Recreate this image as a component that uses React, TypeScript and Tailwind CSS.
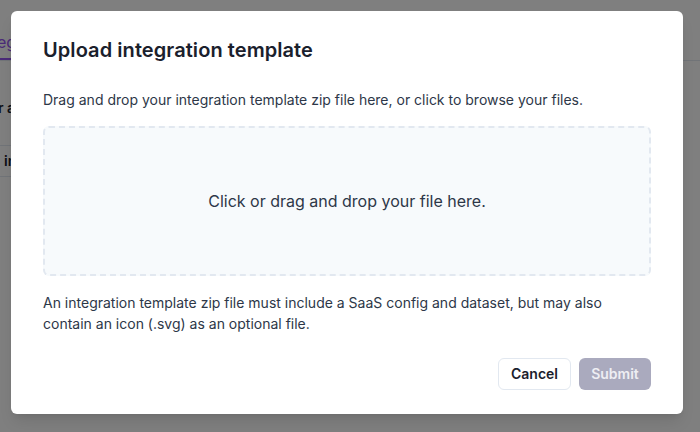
// Upload dialog over a dimmed integrations page.
function PageBehind() {
  return (
    <div className="h-full w-full overflow-hidden bg-white">
      <div className="flex h-[61px] items-end border-b border-[#e2e8f0]">
        <div className="w-[40px] border-b-2 border-[#9656f0] pb-[4px] text-base leading-6 text-[#9656f0]">
          <span className="ml-[-3px]">eg</span>
        </div>
      </div>
      <div className="mt-[37px] text-sm font-semibold leading-5 text-[#1a202c]">
        <span className="ml-[-2px]">r a</span>
      </div>
      <div className="mt-[27px] flex h-[32px] w-[660px] items-center border-y border-[#e2e8f0] text-sm font-semibold text-[#1a202c]">
        <span className="ml-1">in</span>
      </div>
    </div>
  );
}

export default function App() {
  return (
    <div className="relative h-[432px] w-[700px] overflow-hidden font-['Inter',sans-serif]">
      <PageBehind />
      <div className="absolute inset-0 bg-black/50" />
      <div className="absolute left-[11px] top-[11px] flex h-[403px] w-[672px] flex-col rounded-md bg-white px-8 shadow-lg">
        <h2 className="mt-[25px] text-xl font-semibold leading-7 tracking-[0.07px] text-[#1a202c]">
          Upload integration template
        </h2>
        <p className="mt-[26px] text-sm leading-5 text-[#2d3748]">
          Drag and drop your integration template zip file here, or click to browse your files.
        </p>
        <div className="mt-[16px] flex h-[150px] items-center justify-center rounded-md border-2 border-dashed border-[#e2e8f0] bg-[#f7fafc]">
          <span className="text-base text-[#2d3748]">Click or drag and drop your file here.</span>
        </div>
        <p className="mt-[16px] text-sm leading-[21px] text-[#2d3748]">
          An integration template zip file must include a SaaS config and dataset, but may also
          <br />
          contain an icon (.svg) as an optional file.
        </p>
        <div className="mt-[24px] flex justify-end gap-2">
          <button className="h-8 w-[73px] rounded-md border border-[#e2e8f0] bg-white text-sm font-semibold text-[#1a202c]">
            Cancel
          </button>
          <button className="h-8 w-[72px] rounded-md bg-[#aaaabe] text-sm font-semibold text-[#eeeef3]">
            Submit
          </button>
        </div>
      </div>
    </div>
  );
}
